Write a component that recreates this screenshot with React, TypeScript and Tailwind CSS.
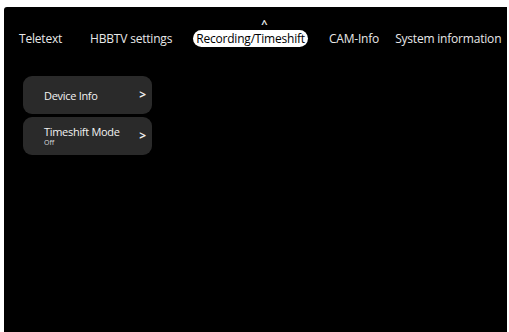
const tabs = ['Teletext', 'HBBTV settings', 'Recording/Timeshift', 'CAM-Info', 'System information'];
const gaps = ['', 'ml-[28px]', 'ml-[21px]', 'ml-[21px]', 'ml-[16px]'];

function Card({ title, sub }: { title: string; sub?: string }) {
  return (
    <div className="flex h-[38px] w-[129px] items-center justify-between rounded-[9px] bg-[#2a2a2a] pl-[21px] pr-[6px]">
      <div className="flex flex-col leading-none">
        <span className="text-[11px] tracking-[-0.3px] text-[#f2f2f2]">{title}</span>
        {sub && <span className="mt-[2px] text-[7px] text-[#dddddd]">{sub}</span>}
      </div>
      <span className="text-[12px] font-bold text-[#eeeeee]">&gt;</span>
    </div>
  );
}

export default function App() {
  return (
    <div className="h-[332px] w-[509px] bg-white pl-[4px] pr-[2px] pt-[7px]" style={{ fontFamily: '"Open Sans", sans-serif' }}>
      <div className="flex h-full flex-col rounded-tl-[3px] bg-black">
        <div className="relative mt-[23px] flex items-center pl-[15px]">
          {tabs.map((t, i) => {
            const active = i === 2;
            return (
              <div key={t} className={'relative ' + gaps[i]}>
                {active && (
                  <span className="absolute -top-[12px] left-[68px] text-[11px] font-bold leading-none text-[#e6e6e6]">^</span>
                )}
                <span
                  className={
                    'block whitespace-nowrap text-[12px] leading-[17px] tracking-[-0.2px] ' +
                    (active ? 'rounded-full bg-white px-[3px] text-black' : 'text-[#e8e8e8]')
                  }
                >
                  {t}
                </span>
              </div>
            );
          })}
        </div>
        <div className="mt-[29px] flex flex-col gap-[3px] pl-[19px]">
          <Card title="Device Info" />
          <Card title="Timeshift Mode" sub="Off" />
        </div>
      </div>
    </div>
  );
}
